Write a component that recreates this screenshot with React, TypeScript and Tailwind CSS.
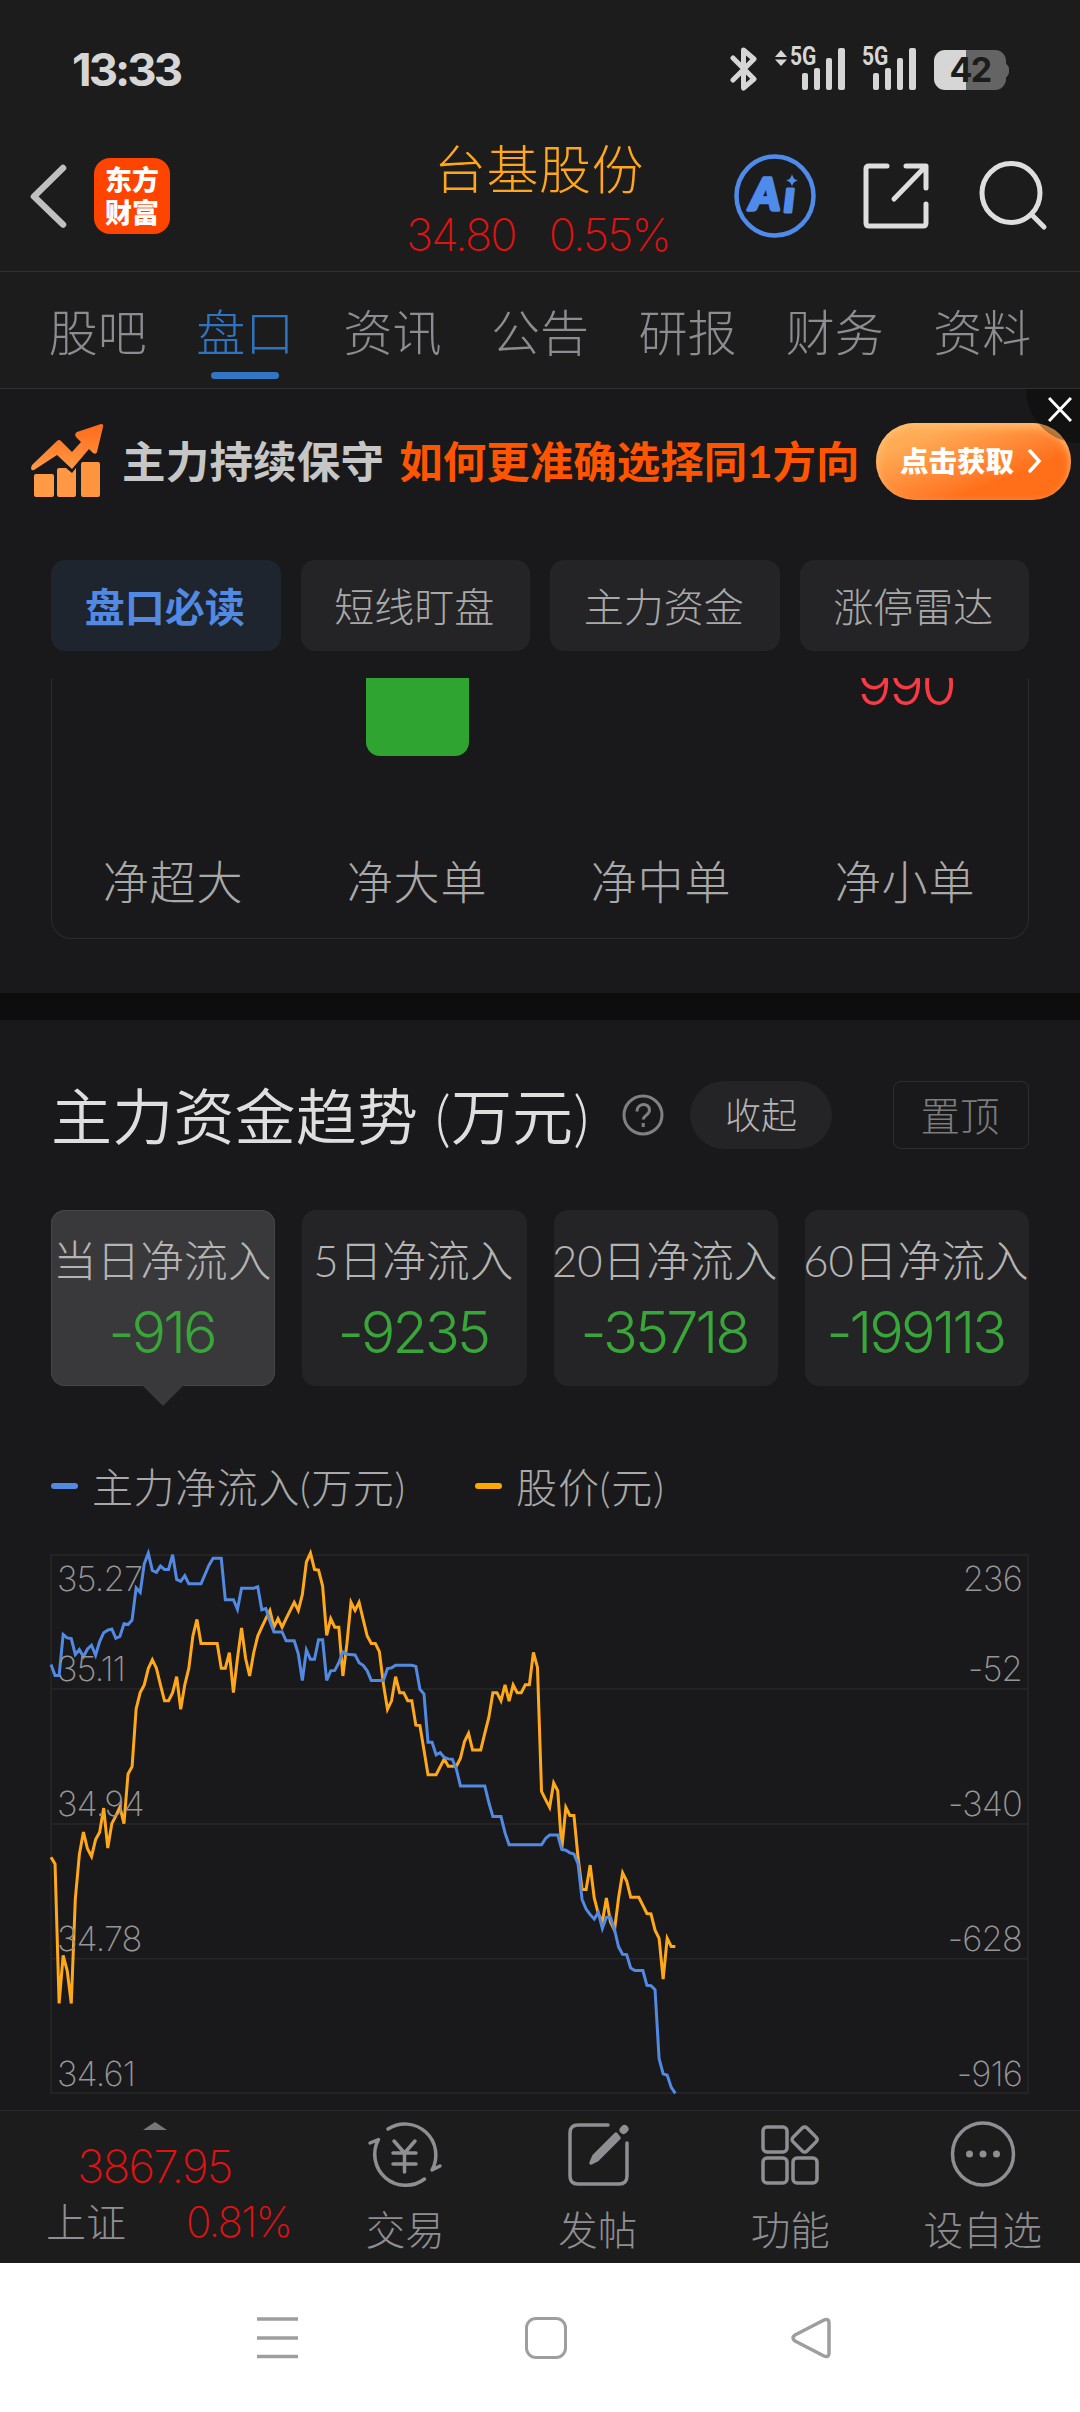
import React from "react";

const tabs = ["股吧", "盘口", "资讯", "公告", "研报", "财务", "资料"];
const chips = ["盘口必读", "短线盯盘", "主力资金", "涨停雷达"];
const orders = ["净超大", "净大单", "净中单", "净小单"];
const periods = [
  { label: "当日净流入", value: "-916" },
  { label: "5日净流入", value: "-9235" },
  { label: "20日净流入", value: "-35718" },
  { label: "60日净流入", value: "-199113" },
];
const priceAxis = ["35.27", "35.11", "34.94", "34.78", "34.61"];
const flowAxis = ["236", "-52", "-340", "-628", "-916"];

// Points are "minute,level" pairs; the trading day holds 241 minutes.
const flowLine =
  "0,367 1,397 2,397 3,286 4,295 5,297 6,340 7,327 8,346 9,325 10,315 11,342 12,305 13,281 14,274 15,271 16,296 17,291 18,257 19,259 20,247 21,160 22,172 23,95 24,66 25,113 26,118 27,101 28,110 29,110 30,70 31,137 32,142 33,127 34,149 37,149 39,98 40,80 42,80 43,192 45,192 46,218 47,161 50,161 51,157 52,219 53,216 54,250 55,279 57,279 58,303 60,303 61,338 62,410 63,328 64,353 65,353 66,300 67,300 68,410 69,384 70,383 71,362 72,333 73,339 75,341 76,362 77,369 78,384 79,410 82,410 83,378 84,376 85,369 89,369 90,372 91,434 92,447 93,577 94,577 95,611 96,605 97,618 98,622 99,623 100,650 101,695 107,695 108,740 109,778 111,778 112,822 113,854 121,854 122,837 123,828 125,828 126,867 127,869 128,876 129,879 130,905 131,1002 132,1028 133,1043 134,1055 135,1037 136,1080 137,1050 138,1050 139,1083 140,1130 141,1150 142,1151 143,1187 144,1194 146,1194 147,1234 148,1235 149,1246 150,1432 151,1473 152,1477 153,1510 154,1526";
const priceLine =
  "0,888 1,906 2,1283 3,1153 4,1195 5,1283 6,1000 7,880 8,820 9,865 10,886 11,840 12,820 13,755 14,863 15,797 16,776 17,752 18,797 19,663 20,643 21,487 22,443 23,422 24,378 25,354 26,377 27,422 28,465 29,465 30,443 31,400 32,488 33,422 34,377 35,290 36,245 37,310 41,310 42,377 43,377 44,335 45,443 46,350 47,268 48,350 49,398 50,335 51,290 52,266 53,243 54,221 55,266 56,243 57,266 58,243 60,199 61,221 62,178 63,90 64,66 65,110 66,112 67,155 68,288 69,243 70,266 71,266 72,398 73,310 74,199 75,221 76,199 77,245 78,290 79,310 80,310 81,332 82,420 83,488 84,465 85,400 86,443 87,443 88,465 89,465 90,531 91,532 92,598 93,665 95,665 97,622 98,642 100,642 101,620 102,575 103,553 104,598 106,598 107,553 108,510 109,443 110,443 111,465 112,422 113,466 114,422 115,443 116,443 117,422 118,422 119,334 120,375 121,710 122,732 123,753 124,687 125,708 126,865 127,753 128,775 129,775 130,888 131,975 132,975 133,909 134,998 135,1040 136,1063 137,998 138,1063 139,1085 140,998 141,930 142,952 143,996 145,996 146,1018 147,1040 148,1041 149,1085 150,1107 151,1217 152,1107 153,1129 154,1129";

function Signal({ arrows }: { arrows?: boolean }) {
  return (
    <div className={arrows ? "relative h-[42px] w-[70px]" : "relative ml-[17px] h-[42px] w-[54px]"}>
      {arrows && (
        <svg className="absolute left-0 top-[2px]" width="12" height="16" fill="#d6d6d6">
          <path d="M0 7L6 0l6 7zM0 9.5h12L6 16z" />
        </svg>
      )}
      <span
        className={
          (arrows ? "left-[15px]" : "left-0") +
          " absolute -top-[1px] origin-left scale-x-[0.84] font-['Roboto'] text-[25px] font-bold leading-[20px] text-[#d6d6d6]"
        }
      >
        5G
      </span>
      <svg className="absolute right-0 top-0" width="44" height="42" fill="#d6d6d6">
        <rect x="1" y="25" width="6" height="17" rx="2" />
        <rect x="13" y="20" width="6" height="22" rx="2" />
        <rect x="25" y="10" width="6" height="32" rx="2" />
        <rect x="37" y="0" width="7" height="42" rx="2" />
      </svg>
    </div>
  );
}

function StatusBar() {
  return (
    <div className="flex h-[138px] items-center pl-[72px] pr-[71px]">
      <span className="pt-[2px] font-['Inter'] text-[45.500px] font-bold leading-none tracking-[-0.065em] text-[#d6d6d6]">13:33</span>
      <svg className="ml-auto mr-[18px]" width="27" height="46" fill="none" stroke="#d6d6d6" strokeWidth="5" strokeLinejoin="round" strokeLinecap="round">
        <path d="M3 12L24 33 13.500 42V4L24 13 3 34" />
      </svg>
      <Signal arrows />
      <Signal />
      <div className="relative ml-[18px] mt-[2px] h-[40px] w-[75px]">
        <div className="absolute right-0 top-[13px] h-[15px] w-[8px] rounded-r-md bg-[#646464]" />
        <div className="absolute inset-y-0 left-0 flex w-[72px] items-center justify-center overflow-hidden rounded-[11px] bg-gradient-to-r from-[#d6d6d6] from-45% to-[#646464] to-45%">
          <span className="font-['Inter'] text-[34px] font-bold leading-none tracking-[-0.05em] text-[#1c1c1c]">42</span>
        </div>
      </div>
    </div>
  );
}

function Header() {
  return (
    <div className="flex h-[133px] pl-[30px]">
      <svg className="mt-[26px] shrink-0" width="38" height="64" fill="none" stroke="#c0c0c0" strokeWidth="6.500" strokeLinecap="round" strokeLinejoin="round">
        <path d="M33 4L4 32.500l29 28" />
      </svg>
      <div className="ml-[26px] mt-[20px] flex h-[76px] w-[76px] shrink-0 flex-col items-center justify-center rounded-[16px] bg-[#ff4400] text-[27px] font-black leading-[33px] text-white">
        <span>东方</span>
        <span>财富</span>
      </div>
      <div className="ml-[218px] flex w-[300px] shrink-0 flex-col items-center">
        <div className="flex h-[61px] items-center whitespace-nowrap pl-[2px] text-[52px] font-light leading-none tracking-[0.5px] text-[#ffa61a]">台基股份</div>
        <div className="flex h-[70px] items-center gap-[33px] whitespace-nowrap font-['Inter'] text-[45px] font-extralight leading-none tracking-[-0.04em] text-[#e01212]">
          <span>34.80</span>
          <span>0.55%</span>
        </div>
      </div>
      <svg className="ml-[46px] mt-[16px] shrink-0" width="82" height="84" fill="none">
        <ellipse cx="41" cy="42" rx="38.500" ry="39.500" stroke="#4f8bea" strokeWidth="4.500" />
        <path d="M58 20q1 5.500 6 6.500-5 1-6 6-1-5-6-6 5-1 6-6.500z" fill="#4f8bea" />
        <g fontFamily="Lato" fontWeight="900" fill="#4f8bea" stroke="#4f8bea" strokeLinejoin="round">
          <text x="16" y="56" fontSize="44" strokeWidth="3.500" fontStyle="italic" textLength="30" lengthAdjust="spacingAndGlyphs">
            A
          </text>
          <text x="50" y="58" fontSize="43" strokeWidth="3" fontStyle="italic">
            ı
          </text>
        </g>
      </svg>
      <svg className="ml-[46px] mt-[24px] shrink-0" width="68" height="68" fill="none" stroke="#dedede" strokeWidth="5" strokeLinecap="round" strokeLinejoin="round">
        <path d="M25 4H7q-3 0-3 3v54q0 3 3 3h54q3 0 3-3V42M44 4h20v22M32 37L63 5" />
      </svg>
      <svg className="ml-[48px] mt-[22px] shrink-0" width="72" height="72" fill="none" stroke="#dedede" strokeWidth="5" strokeLinecap="round">
        <ellipse cx="33" cy="33" rx="29" ry="29.500" />
        <path d="M54 55l12 12" />
      </svg>
    </div>
  );
}

function Tabs() {
  return (
    <div className="flex h-[118px] border-y border-[#303033] px-[24px]">
      {tabs.map((t, i) => (
        <div key={t} className="relative flex flex-1 justify-center">
          <span className={(i === 1 ? "text-[#2f74c0]" : "text-[#8c8c91]") + " mt-[28px] text-[49px] font-light leading-[64px]"}>{t}</span>
          {i === 1 && <div className="absolute bottom-[9px] h-[7px] w-[68px] rounded-full bg-[#3076c4]" />}
        </div>
      ))}
    </div>
  );
}

function Banner() {
  return (
    <div className="relative flex h-[145px] items-center overflow-hidden pb-[1px] pl-[31px] pr-[9px]">
      <svg width="74" height="74" viewBox="0 0 74 74">
        <defs>
          <linearGradient id="rise" x1="0" y1="0" x2="0" y2="1">
            <stop offset="0" stopColor="#ff6a1a" />
            <stop offset="1" stopColor="#ff9a44" />
          </linearGradient>
        </defs>
        <path d="M1 41L26 17q2-2 4 0l11 11 9-10-5-5q-2-3 1-5L70 0q3 0 2 3l-6 25q-1 3-4 1l-4-4-17 20-15-14L3 46q-3 1-3-2z" fill="url(#rise)" />
        <rect x="3" y="50" width="20" height="23" rx="2" fill="#ff9a45" />
        <path d="M26 46q0-2 2-2h7l6 5 4-5v27q0 2-2 2H28q-2 0-2-2z" fill="#ff9744" />
        <rect x="50" y="38" width="19" height="35" rx="2" fill="#ff943f" />
      </svg>
      <span className="ml-[17px] whitespace-nowrap pt-[2px] text-[43.500px] font-bold leading-none tracking-[0.2px] text-[#c6c6c6]">主力持续保守</span>
      <span className="ml-[15px] whitespace-nowrap pt-[2px] text-[43.500px] font-bold leading-none text-[#ff5500]">如何更准确选择同1方向</span>
      <div className="ml-auto flex h-[77px] w-[195px] items-center gap-[14px] rounded-full bg-gradient-to-br from-[#ffab55] from-20% to-[#ff6e18] to-70% pl-[24px] shadow-[inset_0_4px_8px_#ffc070]">
        <span className="whitespace-nowrap text-[28.500px] font-black leading-none text-white">点击获取</span>
        <svg width="14" height="24" fill="none" stroke="#fff" strokeWidth="3.500" strokeLinecap="round">
          <path d="M2 2l9 10-9 10" />
        </svg>
      </div>
      <div className="absolute -right-[54px] -top-[54px] h-[108px] w-[108px] rounded-full bg-black/30" />
      <svg className="absolute right-[8px] top-[8px]" width="24" height="25" stroke="#fff" strokeWidth="3">
        <path d="M1 1l22 23M23 1L1 24" />
      </svg>
    </div>
  );
}

function OrderCard() {
  return (
    <div className="mx-[51px] mt-[27px] flex h-[261px] rounded-b-[20px] border border-t-0 border-[#2c2c2f]">
      {orders.map((o, i) => (
        <div key={o} className="relative flex flex-1 flex-col items-center justify-end overflow-hidden">
          {i === 1 && <div className="absolute left-[70px] top-0 h-[78px] w-[103px] rounded-b-[14px] bg-[#30a430]" />}
          {i === 3 && <div className="absolute -top-[23px] font-['Inter'] text-[57px] leading-[60px] tracking-[-0.04em] text-[#f83a44]">990</div>}
          <span className="mb-[23px] mr-[2px] text-[46px] font-light leading-[66px] tracking-[0.8px] text-[#a9a9a9]">{o}</span>
        </div>
      ))}
    </div>
  );
}

function Chart() {
  return (
    <div className="relative ml-[51px] mt-[42px] h-[540px] w-[978px]">
      <svg className="absolute left-0 top-[3px] overflow-visible" width="977" height="538" viewBox="0 71 241 1454" preserveAspectRatio="none" fill="none" strokeWidth="3" strokeLinejoin="miter">
        <g stroke="#272729" strokeWidth="1.500">
          <rect x="0" y="71" width="241" height="1454" vectorEffect="non-scaling-stroke" />
          {[433, 798, 1162].map((y) => (
            <path key={y} d={`M0 ${y}H241`} vectorEffect="non-scaling-stroke" />
          ))}
        </g>
        <polyline points={priceLine} stroke="#ffa819" vectorEffect="non-scaling-stroke" />
        <polyline points={flowLine} stroke="#5189e3" vectorEffect="non-scaling-stroke" />
      </svg>
      <div className="relative flex h-full flex-col font-['Inter'] text-[34.500px] font-extralight leading-[40px] tracking-[-0.025em] text-[#969696]">
        {priceAxis.map((p, i) => (
          <div key={p} className={(i === 0 ? "h-[45px] pt-[7px]" : i === 1 ? "h-[91px] pt-[52px]" : "h-[135px] pt-[96px]") + " flex shrink-0 justify-between pl-[6px] pr-[7px]"}>
            <span>{p}</span>
            <span>{flowAxis[i]}</span>
          </div>
        ))}
      </div>
    </div>
  );
}

function Trend() {
  return (
    <div className="flex h-[1090px] flex-col">
      <div className="mt-[61px] flex h-[68px] items-center pl-[51px] pr-[51px]">
        <span className="whitespace-nowrap pt-[3px] text-[61px] font-[350] leading-none tracking-[0.2px] text-[#dedede]">主力资金趋势 (万元)</span>
        <svg className="ml-auto" width="42" height="42" fill="none" stroke="#808080" strokeWidth="3">
          <circle cx="21" cy="21" r="19" />
          <path d="M15 17.500c0-9 12.500-9 12.500-1.500 0 5-6 5-6.200 9.500M21.200 29v4" />
        </svg>
        <div className="ml-[26px] flex h-[68px] w-[142px] items-center justify-center rounded-full bg-[#242426] text-[36px] font-light leading-none text-[#b4b4b4]">收起</div>
        <div className="ml-[61px] flex h-[68px] w-[136px] items-center justify-center rounded-[8px] border border-[#2e2e30] pr-[2px] pt-[2px] text-[39.500px] font-light leading-none text-[#7c7c7c]">置顶</div>
      </div>
      <div className="mx-[51px] mt-[61px] grid grid-cols-4 gap-[27px]">
        {periods.map((p, i) => (
          <div
            key={p.label}
            className={(i === 0 ? "bg-[#39393b] shadow-[inset_0_0_0_1px_#454547]" : "bg-[#242426]") + " relative flex h-[176px] flex-col items-center whitespace-nowrap rounded-[14px]"}
          >
            <div className="mr-[2px] flex h-[101px] items-center text-[43.700px] font-light leading-none text-[#b4b4b4]">{p.label}</div>
            <div className="mr-[3px] flex h-[43px] items-center font-['Inter'] text-[57.500px] leading-none tracking-[-0.05em] text-[#38a638]">{p.value}</div>
            {i === 0 && (
              <svg className="absolute top-[174px]" width="42" height="22">
                <path d="M0 1h42L21 22z" fill="#39393b" />
              </svg>
            )}
          </div>
        ))}
      </div>
      <div className="ml-[51px] mt-[76px] flex h-[48px] items-center text-[41px] font-light leading-none text-[#a9a9a9]">
        <div className="mr-[14px] h-[6px] w-[27px] rounded-[3px] bg-[#5189e3]" />
        <span className="w-[383px] pt-[2px] tracking-[0.6px]">主力净流入(万元)</span>
        <div className="mr-[14px] h-[6px] w-[27px] rounded-[3px] bg-[#ffa800]" />
        <span className="pt-[2px] tracking-[0.9px]">股价(元)</span>
      </div>
      <Chart />
    </div>
  );
}

const actions = [
  {
    label: "交易",
    icon: (
      <>
        <path d="M21 8A31 31 0 0 1 65 49l8-4M57.500 58A31 31 0 0 1 11.500 18.500L3 22" />
        <path d="M27 20l10.500 12L48 20M26 32h23M26 43h23M37.500 32v19" />
      </>
    ),
  },
  {
    label: "发帖",
    icon: (
      <>
        <path d="M48 4H18q-8 0-8 8v43q0 8 8 8h41q8 0 8-8V22" />
        <path d="M31 42l3-7 22-22 3 4-22 22z" fill="#8e8e93" />
        <path d="M63.500 9l1-1" strokeWidth="8" />
      </>
    ),
  },
  {
    label: "功能",
    icon: (
      <>
        <rect x="11" y="6" width="24" height="25" rx="4" />
        <rect x="11" y="37" width="24" height="25" rx="4" />
        <rect x="41" y="37" width="24" height="25" rx="4" />
        <rect x="43" y="9" width="19.500" height="19.500" rx="3" transform="rotate(45 53 18.500)" />
      </>
    ),
  },
  {
    label: "设自选",
    icon: (
      <>
        <ellipse cx="38" cy="33" rx="30.500" ry="31" />
        <g fill="#8e8e93" stroke="none">
          <circle cx="24.500" cy="33" r="3.500" />
          <circle cx="38" cy="33" r="3.500" />
          <circle cx="51.500" cy="33" r="3.500" />
        </g>
      </>
    ),
  },
];

function BottomBar() {
  return (
    <div className="flex h-[153px] border-t border-[#2a2a2c] bg-[#1c1c1c]">
      <div className="flex w-[309px] flex-col items-center">
        <svg className="mt-[11px]" width="24" height="8">
          <path d="M0 8L12 0l12 8z" fill="#77777b" />
        </svg>
        <div className="mt-[13px] font-['Inter'] text-[45.500px] font-extralight leading-[48px] tracking-[-0.035em] text-[#e01212]">3867.95</div>
        <div className="mt-[9px] flex w-full items-center pl-[46px] leading-[44px]">
          <span className="text-[40px] font-light text-[#8e8e93]">上证</span>
          <span className="ml-[60px] font-['Inter'] text-[42px] font-extralight tracking-[-0.04em] text-[#e01212]">0.81%</span>
        </div>
      </div>
      <div className="flex">
        {actions.map((a) => (
          <div key={a.label} className="flex w-[192.500px] flex-col items-center">
            <svg className="mt-[10px]" width="76" height="68" fill="none" stroke="#8e8e93" strokeWidth="3.500" strokeLinecap="round" strokeLinejoin="round">
              {a.icon}
            </svg>
            <span className="mt-[17px] text-[39.500px] font-light leading-[48px] text-[#8e8e93]">{a.label}</span>
          </div>
        ))}
      </div>
    </div>
  );
}

function NavBar() {
  return (
    <div className="flex h-[149px] items-center bg-white pl-[257px]">
      <svg width="41" height="44" stroke="#9e9e9e" strokeWidth="3.500">
        <path d="M0 3h41M0 22h41M0 40.500h41" />
      </svg>
      <div className="ml-[227px] h-[42px] w-[42px] rounded-[11px] border-[3.500px] border-[#9e9e9e]" />
      <svg className="ml-[224px]" width="42" height="44" fill="none" stroke="#9e9e9e" strokeWidth="3.500" strokeLinejoin="round">
        <path d="M4 19L33 4q5-2 5 3v30q0 5-5 3L4 25q-4-3 0-6z" />
      </svg>
    </div>
  );
}

export default function App() {
  return (
    <div className="h-[2412px] w-[1080px] overflow-hidden bg-[#19191b] font-['Lato','Noto_Sans_CJK_SC',sans-serif] font-light">
      <div className="bg-[#1c1c1c]">
        <StatusBar />
        <Header />
        <Tabs />
      </div>
      <Banner />
      <div className="mx-[51px] mt-[26px] grid h-[91px] grid-cols-4 gap-[20px]">
        {chips.map((c, i) => (
          <div
            key={c}
            className={(i === 0 ? "bg-[#1e252e] font-bold text-[#5189e3]" : "bg-[#242426] font-light text-[#a9a9a9]") + " flex items-center justify-center rounded-[14px] pr-[2px] pt-[2px] text-[40px] leading-none"}
          >
            {c}
          </div>
        ))}
      </div>
      <OrderCard />
      <div className="mt-[54px] h-[27px] bg-[#0d0d0d]" />
      <Trend />
      <BottomBar />
      <NavBar />
    </div>
  );
}
